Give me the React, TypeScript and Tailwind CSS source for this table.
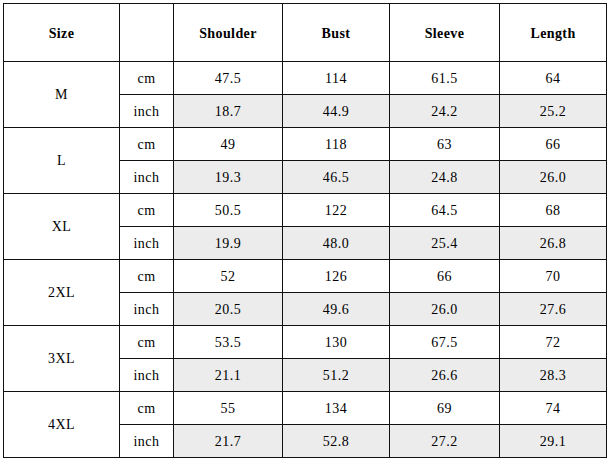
const HEADERS = ["Shoulder", "Bust", "Sleeve", "Length"];

const SIZES: { size: string; cm: string[]; inch: string[] }[] = [
  { size: "M", cm: ["47.5", "114", "61.5", "64"], inch: ["18.7", "44.9", "24.2", "25.2"] },
  { size: "L", cm: ["49", "118", "63", "66"], inch: ["19.3", "46.5", "24.8", "26.0"] },
  { size: "XL", cm: ["50.5", "122", "64.5", "68"], inch: ["19.9", "48.0", "25.4", "26.8"] },
  { size: "2XL", cm: ["52", "126", "66", "70"], inch: ["20.5", "49.6", "26.0", "27.6"] },
  { size: "3XL", cm: ["53.5", "130", "67.5", "72"], inch: ["21.1", "51.2", "26.6", "28.3"] },
  { size: "4XL", cm: ["55", "134", "69", "74"], inch: ["21.7", "52.8", "27.2", "29.1"] },
];

const cell = "border border-[#111] text-center align-middle p-0";

export default function App() {
  return (
    <div className="bg-white w-[609px] h-[461px] pt-[3px] pl-[3px] text-black font-[family-name:'Liberation_Serif','Times_New_Roman',serif] text-[14px] tracking-[0.5px]">
      <table className="table-fixed border-collapse w-[603px]">
        <colgroup>
          <col className="w-[116px]" />
          <col className="w-[54px]" />
          <col className="w-[109px]" />
          <col className="w-[107px]" />
          <col className="w-[110px]" />
          <col className="w-[107px]" />
        </colgroup>
        <thead>
          <tr className="h-[58px]">
            <th className={`${cell} font-bold tracking-[0.4px] pt-[2px]`}>Size</th>
            <th className={cell}></th>
            {HEADERS.map((h) => (
              <th key={h} className={`${cell} font-bold tracking-[0.4px] pt-[2px]`}>
                {h}
              </th>
            ))}
          </tr>
        </thead>
        <tbody>
          {SIZES.map((s) => [
            <tr key={`${s.size}-cm`} className="h-[33px]">
              <td rowSpan={2} className={cell}>
                {s.size}
              </td>
              <td className={cell}>cm</td>
              {s.cm.map((v, i) => (
                <td key={i} className={cell}>
                  {v}
                </td>
              ))}
            </tr>,
            <tr key={`${s.size}-inch`} className="h-[33px]">
              <td className={cell}>inch</td>
              {s.inch.map((v, i) => (
                <td key={i} className={`${cell} bg-[#ececec]`}>
                  {v}
                </td>
              ))}
            </tr>,
          ])}
        </tbody>
      </table>
    </div>
  );
}
